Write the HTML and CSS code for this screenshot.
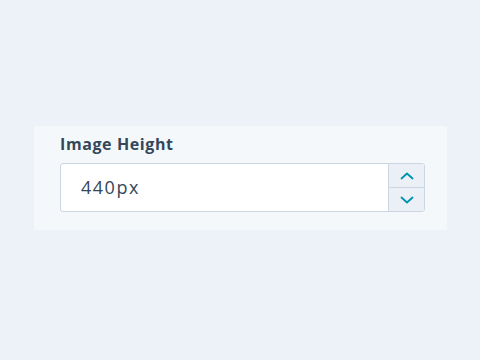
FILE: index.html
```html
<!DOCTYPE html>
<html>
<head>
<meta charset="utf-8">
<link rel="stylesheet" href="styles.css">
</head>
<body>
<div class="panel">
  <label class="label">Image Height</label>
  <div class="field">
    <div class="value">440px</div>
    <div class="spin">
      <div class="btn"><svg width="16" height="10" viewBox="0 0 16 10"><path d="M2.5 7.5 L8 2.5 L13.5 7.5" fill="none" stroke="#0091ae" stroke-width="1.8" stroke-linecap="round" stroke-linejoin="round"/></svg></div>
      <div class="btn"><svg width="16" height="10" viewBox="0 0 16 10"><path d="M2.5 2.5 L8 7.5 L13.5 2.5" fill="none" stroke="#0091ae" stroke-width="1.8" stroke-linecap="round" stroke-linejoin="round"/></svg></div>
    </div>
  </div>
</div>
</body>
</html>
```
FILE: styles.css
```css
html, body {
  margin: 0;
  padding: 0;
  background: #edf1f8;
  width: 480px;
  height: 360px;
  overflow: hidden;
}
.panel {
  box-sizing: border-box;
  margin: 126px 0 0 34px;
  width: 413px;
  height: 104px;
  background: #f5f8fb;
  padding: 7px 22px 0 26px;
  font-family: "Open Sans", "Noto Sans", sans-serif;
  color: #33475b;
}
.label {
  display: block;
  font-weight: 700;
  font-size: 16px;
  letter-spacing: 0.6px;
  line-height: 22px;
  margin-bottom: 8px;
}
.field {
  box-sizing: border-box;
  display: flex;
  width: 365px;
  height: 49px;
  border: 1px solid #cbd6e2;
  border-radius: 3px;
  background: #fff;
  overflow: hidden;
}
.value {
  flex: 1;
  font-size: 18px;
  letter-spacing: 1.5px;
  line-height: 46px;
  padding-left: 20px;
}
.spin {
  width: 35px;
  display: flex;
  flex-direction: column;
  border-left: 1px solid #cbd6e2;
  background: #eaf0f6;
}
.btn {
  flex: 1;
  display: flex;
  align-items: center;
  justify-content: center;
}
.btn + .btn {
  border-top: 1px solid #cbd6e2;
}
```
